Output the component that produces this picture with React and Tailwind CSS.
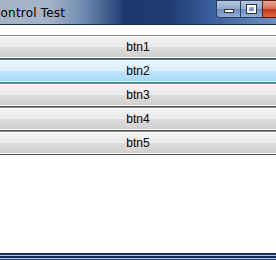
export default function App() {
  const btns = ["btn1", "btn2", "btn3", "btn4", "btn5"];
  return (
    <div className="w-[276px] h-[260px] overflow-hidden bg-white flex flex-col" style={{ fontFamily: '"Liberation Sans", Arial, sans-serif' }}>
      {/* title bar */}
      <div className="h-[25px] shrink-0 flex items-start bg-[linear-gradient(90deg,#a6b4c6_0px,#a3b3c8_50px,#6d88b0_85px,#1c3a70_125px,#1f3c72_170px,#3f62a0_215px,#6f8fc2_276px)] border-b border-[#1b2f55]">
        <div className="flex-1 h-full flex items-center">
          <span className="text-[12px] tracking-[0.2px] text-black ml-[-8px] mt-[1px]" style={{ fontFamily: '"DejaVu Sans", sans-serif' }}>Control Test</span>
        </div>
        <div className="flex h-[18px] mr-[-6px]">
          <div className="w-[25px] h-full border border-[#2a3e62] rounded-bl-[4px] bg-[linear-gradient(#b9c9e0,#8ea7cb_50%,#6d8cbb_50%,#8eb0dc)] flex items-center justify-center">
            <div className="w-[10px] h-[4px] mt-[3px] bg-white border border-[#333]"></div>
          </div>
          <div className="w-[21px] h-full border-y border-[#2a3e62] bg-[linear-gradient(#b9c9e0,#8ea7cb_50%,#6d8cbb_50%,#8eb0dc)] flex items-center justify-center">
            <div className="w-[9px] h-[8px] mb-[1px] border-2 border-white outline outline-1 outline-[#333]"></div>
          </div>
          <div className="w-[20px] h-full border border-[#5a1a10] bg-[linear-gradient(#e9a99a,#d56a52_50%,#c2371c_50%,#d8693f)]"></div>
        </div>
      </div>
      {/* client */}
      <div className="flex-1 flex flex-col pt-[10px] mx-[-6px]">
        {btns.map((b, i) => (
          <div
            key={b}
            className={
              "h-[24px] rounded-[3px] border flex " +
              (i === 1 ? "border-[#3c7fb1]" : "border-[#8a8a8a] border-b-[#505050]")
            }
          >
            <div
              className={
                "flex-1 rounded-[2px] border border-white flex items-center justify-center text-[12px] text-black " +
                (i === 1
                  ? "bg-[linear-gradient(#eaf6fd,#d9f0fc_50%,#bee6fd_50%,#a7d9f5)]"
                  : "bg-[linear-gradient(#f2f2f2,#ebebeb_50%,#dddddd_50%,#cfcfcf)]")
              }
            >
              {b}
            </div>
          </div>
        ))}
      </div>
      {/* bottom stripes */}
      <div className="shrink-0 flex flex-col">
        <div className="h-[1px] bg-[#0d1b3d]"></div>
        <div className="h-[1px] bg-[#1f3a78]"></div>
        <div className="h-[1px] bg-[#a9c1e6]"></div>
        <div className="h-[2px] bg-[#142a5c]"></div>
        <div className="h-[1px] bg-[#b8cde9]"></div>
        <div className="h-[1px] bg-[#2a4478]"></div>
      </div>
    </div>
  );
}
